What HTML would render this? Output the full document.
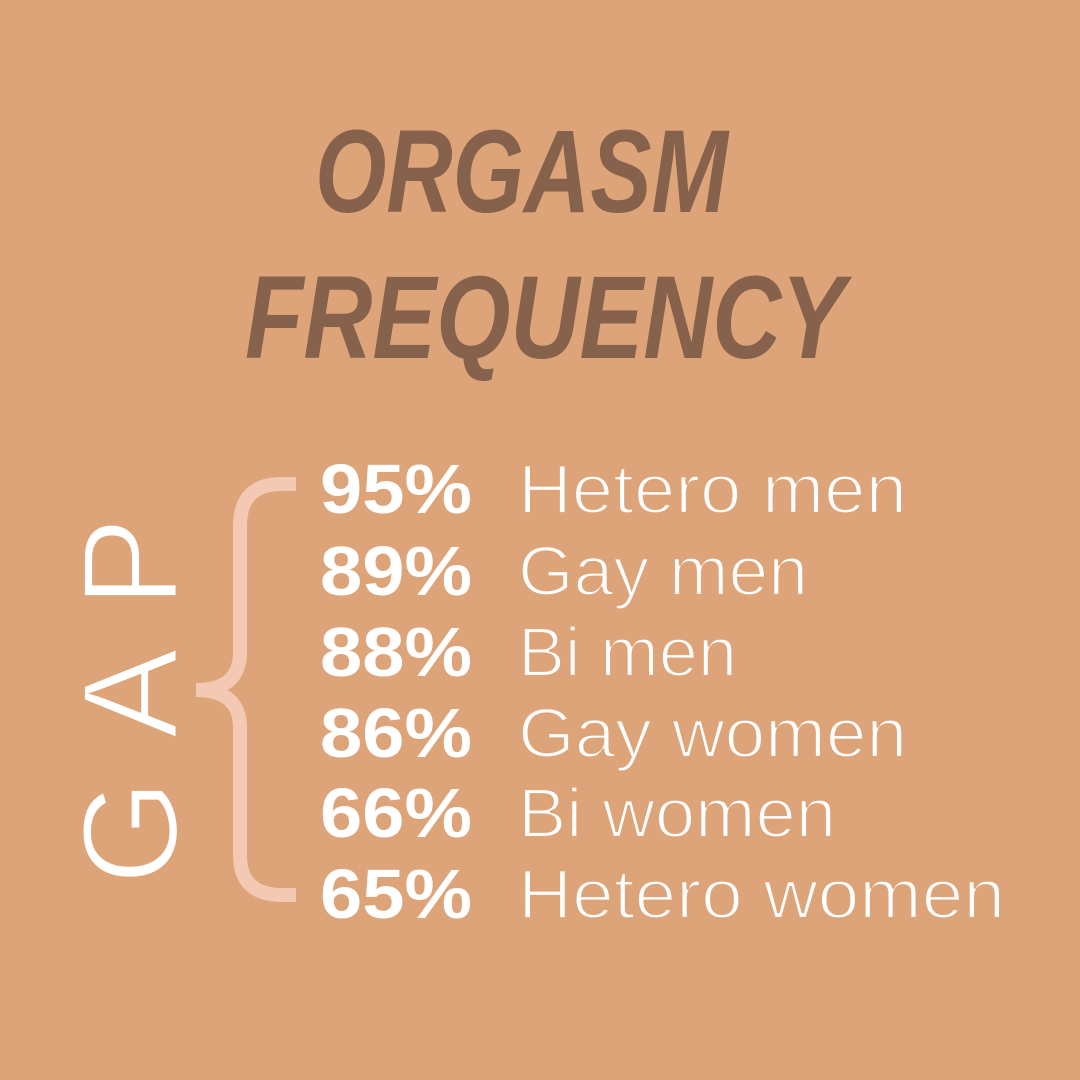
<!DOCTYPE html>
<html><head><meta charset="utf-8"><style>
html,body{margin:0;padding:0;background:#DDA479;}
svg{display:block}
</style></head><body>
<svg width="1080" height="1080" viewBox="0 0 1080 1080" xmlns="http://www.w3.org/2000/svg">
<rect width="1080" height="1080" fill="#DDA479"/>
<g fill="#86614B" font-family="Liberation Sans, sans-serif" font-weight="bold" font-style="italic">
<text x="315" y="212" font-size="118" textLength="413" lengthAdjust="spacingAndGlyphs">ORGASM</text>
<text x="245" y="358" font-size="118" textLength="600" lengthAdjust="spacingAndGlyphs">FREQUENCY</text>
</g>
<path d="M296,484 H282 Q240,484 240,526 V652 Q240,690 196,690 Q240,690 240,728 V855 Q240,895 282,895 H296" fill="none" stroke="#F4C9B3" stroke-width="14"/>
<text transform="translate(177,885) rotate(-90)" fill="#fff" stroke="#DDA479" stroke-width="3" font-family="Liberation Sans, sans-serif" font-size="136" textLength="368" lengthAdjust="spacing">GAP</text>
<g fill="#fff" font-family="Liberation Sans, sans-serif">
<g font-weight="bold" font-size="70">
<text x="320" y="513" textLength="152" lengthAdjust="spacingAndGlyphs">95%</text>
<text x="320" y="595" textLength="152" lengthAdjust="spacingAndGlyphs">89%</text>
<text x="320" y="676" textLength="152" lengthAdjust="spacingAndGlyphs">88%</text>
<text x="320" y="757" textLength="152" lengthAdjust="spacingAndGlyphs">86%</text>
<text x="320" y="837" textLength="152" lengthAdjust="spacingAndGlyphs">66%</text>
<text x="320" y="918" textLength="152" lengthAdjust="spacingAndGlyphs">65%</text>
</g>
<g font-size="70" stroke="#DDA479" stroke-width="2.2">
<text x="518" y="513" textLength="389" lengthAdjust="spacingAndGlyphs">Hetero men</text>
<text x="518" y="595" textLength="290" lengthAdjust="spacingAndGlyphs">Gay men</text>
<text x="518" y="676" textLength="219" lengthAdjust="spacingAndGlyphs">Bi men</text>
<text x="518" y="757" textLength="389" lengthAdjust="spacingAndGlyphs">Gay women</text>
<text x="518" y="837" textLength="318" lengthAdjust="spacingAndGlyphs">Bi women</text>
<text x="518" y="918" textLength="487" lengthAdjust="spacingAndGlyphs">Hetero women</text>
</g>
</g>
</svg>
</body></html>
